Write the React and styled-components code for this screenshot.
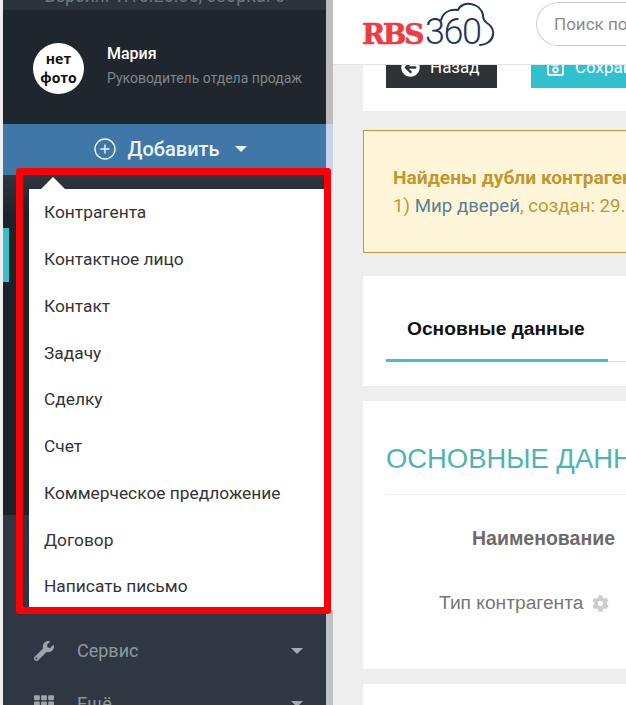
import React from 'react'
import styled, { createGlobalStyle } from 'styled-components'
import { FaWrench, FaTh, FaCog, FaArrowCircleLeft, FaRegSave } from 'react-icons/fa'
import { CirclePlus } from 'lucide-react'

const GlobalStyle = createGlobalStyle`
  html, body { margin: 0; padding: 0; height: 100%; overflow: hidden; background: #eeeeee; }
  body { font-family: "Liberation Sans", Arial, sans-serif; }
  * { box-sizing: border-box; }
`

const Shell = styled.div`
  position: relative;
  display: flex;
  width: 626px;
  height: 705px;
  overflow: hidden;
  padding-left: 3px;
`

// Левая колонка
const Sidebar = styled.aside`
  width: 323px;
  flex: none;
  display: flex;
  flex-direction: column;
  background: #2f3740;
`

const VersionBar = styled.div`
  height: 10px;
  flex: none;
  display: flex;
  align-items: flex-end;
  justify-content: center;
  overflow: hidden;
  padding-bottom: 3px;
  background: #2b333b;
  color: #6f767c;
  font: 18px/22px Roboto, sans-serif;
  white-space: nowrap;
`

const UserBlock = styled.div`
  height: 114px;
  flex: none;
  display: flex;
  align-items: flex-start;
  gap: 23px;
  padding: 33px 0 0 30px;
  background: #1f262d;
`

const Avatar = styled.div`
  width: 51px;
  height: 51px;
  flex: none;
  border-radius: 50%;
  background: #fff;
  color: #111;
  display: flex;
  align-items: center;
  justify-content: center;
  text-align: center;
  padding-bottom: 2px;
  font: 700 14px/19px "Open Sans", sans-serif;
`

const UserName = styled.div`
  margin-top: 1px;
  color: #fff;
  font: 500 16px/20px Roboto, sans-serif;
`

const UserRole = styled.div`
  margin-top: 5px;
  color: #7f868c;
  font: 14px/18px Roboto, sans-serif;
`

const AddButton = styled.div`
  height: 51px;
  flex: none;
  display: flex;
  align-items: center;
  justify-content: center;
  gap: 10px;
  padding: 0 0 1px 11px;
  background: #3f78a8;
  color: #eef3f8;
  font: 500 20px/24px Roboto, sans-serif;
`

const Caret = styled.span`
  width: 0;
  height: 0;
  border-left: 6px solid transparent;
  border-right: 6px solid transparent;
  border-top: 6px solid ${p => p.$color};
  margin-left: ${p => p.$gap || 0}px;
`

const NavFade = styled.div`
  height: 53px;
  flex: none;
  background: linear-gradient(#2e3640, #1c2329 80%);
`

const NavActive = styled.div`
  height: 54px;
  flex: none;
  background: #1c2329;
  border-left: 6px solid #37bfcc;
`

const NavSub = styled.div`
  height: 233px;
  flex: none;
  background: #1c2329;
`

const NavList = styled.nav`
  flex: 1;
  padding-top: 109px;
  background: #2f3842;
`

const NavRow = styled.div`
  height: 53px;
  display: flex;
  align-items: center;
  padding: 0 23px 0 31px;
  color: #8e989e;
  font: 18px/22px Roboto, sans-serif;
  svg { flex: none; width: 20px; color: #9ba4a9; font-size: 20px; }
  span:first-of-type { flex: 1; margin-left: 23px; }
`

const Scrollbar = styled.div`
  width: 7px;
  flex: none;
  display: flex;
  flex-direction: column;
`

const ScrollPart = styled.div`
  height: ${p => p.$h}px;
  flex: ${p => (p.$h ? 'none' : 1)};
  background: ${p => p.$color};
`

// Выпадающее меню поверх колонки
const Highlight = styled.div`
  position: absolute;
  left: 16px;
  top: 168px;
  width: 315px;
  height: 446px;
  border: 7px solid #fb0007;
  border-radius: 3px;
  z-index: 3;
`

const Dropdown = styled.ul`
  position: absolute;
  left: 29px;
  top: 189px;
  width: 295px;
  height: 418px;
  margin: 0;
  padding: 0 0 0 15px;
  list-style: none;
  background: #fff;
  display: flex;
  flex-direction: column;
  z-index: 2;
  &::before {
    content: '';
    position: absolute;
    left: 12px;
    top: -12px;
    border-left: 12px solid transparent;
    border-right: 12px solid transparent;
    border-bottom: 12px solid #fff;
  }
`

const DropdownItem = styled.li`
  height: 46.75px;
  flex: none;
  display: flex;
  align-items: center;
  color: #333;
  font: 17.35px/20px Roboto, sans-serif;
`

// Основная часть
const Main = styled.main`
  flex: 1;
  min-width: 0;
  display: flex;
  flex-direction: column;
  background: #eeeeee;
`

const Header = styled.header`
  height: 65px;
  flex: none;
  display: flex;
  align-items: flex-start;
  padding: 2px 0 0 30px;
  background: #fff;
  border-bottom: 1px solid #e4e4e4;
  position: relative;
  z-index: 1;
  overflow: hidden;
`

const Logo = styled.div`
  position: relative;
  width: 173px;
  flex: none;
  display: flex;
  align-items: baseline;
  padding-top: 11px;
  line-height: 38px;
`

const LogoRed = styled.span`
  margin-left: -1px;
  color: #ee3b42;
  font: 700 28px/38px "DejaVu Serif", serif;
  letter-spacing: -2.4px;
  -webkit-text-stroke: 0.6px #ee3b42;
`

const LogoBlue = styled.span`
  margin-left: 3px;
  color: #1d3557;
  font: 300 36px/38px Roboto, sans-serif;
  letter-spacing: -1.4px;
`

const LogoCloud = styled.svg`
  position: absolute;
  left: 0;
  top: -2px;
`

const SearchBox = styled.div`
  width: 200px;
  height: 44px;
  flex: none;
  display: flex;
  align-items: center;
  padding-left: 17px;
  border: 1px solid #cfcfcf;
  border-right: 0;
  border-radius: 22px 0 0 22px;
  color: #8a8a8a;
  font: 17px/20px Roboto, sans-serif;
  white-space: nowrap;
`

const Content = styled.div`
  flex: 1;
  display: flex;
  flex-direction: column;
  padding-left: 30px;
  overflow: hidden;
`

const Toolbar = styled.div`
  height: 46px;
  flex: none;
  display: flex;
  align-items: flex-end;
  gap: 34px;
  padding: 0 0 23px 23px;
  background: #fff;
  overflow: hidden;
  margin-bottom: 19px;
`

const ToolButton = styled.div`
  width: ${p => p.$w}px;
  height: 42px;
  flex: none;
  display: flex;
  align-items: center;
  gap: 10px;
  padding-left: 15px;
  background: ${p => p.$bg};
  color: #fff;
  font: 17px/20px Roboto, sans-serif;
  white-space: nowrap;
  overflow: hidden;
  svg { flex: none; font-size: 19px; }
`

const Alert = styled.div`
  height: 123px;
  flex: none;
  margin-bottom: 23px;
  padding: 33px 0 0 29px;
  width: 400px;
  background: #fff6d9;
  border: 1.5px solid #c19a30;
  color: #c2972f;
  font: 18.7px/28px Roboto, sans-serif;
  white-space: nowrap;
`

const AlertTitle = styled.div`
  font-weight: 700;
  font-size: 19.2px;
`

const AlertLink = styled.span`
  color: #5b7f95;
`

const Card = styled.section`
  flex: none;
  height: ${p => p.$h || 'auto'};
  width: 400px;
  background: #fff;
  margin-bottom: 15px;
`

const Tabs = styled.div`
  height: 86px;
  margin-left: 23px;
  border-bottom: 1px solid #ddd;
`

const Tab = styled.div`
  width: 222px;
  height: 86px;
  padding: 41px 0 0 21px;
  border-bottom: 3px solid #40bfcf;
  color: #111;
  font: 700 19.2px/24px "Liberation Sans", sans-serif;
  white-space: nowrap;
`

const FormBody = styled.div`
  padding: 42px 0 0 23px;
`

const SectionTitle = styled.h2`
  margin: 0;
  height: 52px;
  padding-bottom: 0;
  border-bottom: 1px solid #eeeeee;
  color: #4fb3b0;
  font: 400 27.4px/32px "Liberation Sans", sans-serif;
  white-space: nowrap;
`

const FieldRow = styled.div`
  display: flex;
  justify-content: flex-start;
  align-items: center;
  height: ${p => p.$h}px;
  padding-left: ${p => p.$left}px;
  color: ${p => p.$color};
  font: ${p => p.$weight} ${p => p.$size}px/24px "Liberation Sans", sans-serif;
  white-space: nowrap;
  svg { margin-left: 9px; color: #cccccc; font-size: 17px; }
`

const menuItems = [
  'Контрагента',
  'Контактное лицо',
  'Контакт',
  'Задачу',
  'Сделку',
  'Счет',
  'Коммерческое предложение',
  'Договор',
  'Написать письмо',
]

function App() {
  return (
    <Shell>
      <GlobalStyle />
      <Sidebar>
        <VersionBar>Версия: 1.16.26.06, сборка: 6</VersionBar>
        <UserBlock>
          <Avatar>нет<br />фото</Avatar>
          <div>
            <UserName>Мария</UserName>
            <UserRole>Руководитель отдела продаж</UserRole>
          </div>
        </UserBlock>
        <AddButton>
          <CirclePlus size={24} strokeWidth={1.4} />
          Добавить
          <Caret $color="#eef3f8" $gap={5} />
        </AddButton>
        <NavFade />
        <NavActive />
        <NavSub />
        <NavList>
          <NavRow>
            <FaWrench />
            <span>Сервис</span>
            <Caret $color="#a4acb1" />
          </NavRow>
          <NavRow>
            <FaTh />
            <span>Ещё</span>
            <Caret $color="#a4acb1" />
          </NavRow>
        </NavList>
      </Sidebar>
      <Scrollbar>
        <ScrollPart $h={124} $color="#bdbdbd" />
        <ScrollPart $h={51} $color="#c6d6e8" />
        <ScrollPart $h={435} $color="#f4f4f4" />
        <ScrollPart $color="#bfc3c6" />
      </Scrollbar>
      <Main>
        <Header>
          <Logo>
            <LogoRed>RBS</LogoRed>
            <LogoBlue>360</LogoBlue>
            <LogoCloud width="140" height="50" viewBox="0 0 140 50" fill="none">
              <path
                d="M78 20 C80 13 86 9 95 10 C97 5 103 3 108 4 C114 5 119 9 120 15 C120 18 121 21 124 23 C129 26 131 31 130 35 C129 41 123 45 117 45"
                stroke="#1d3557"
                strokeWidth="2"
                strokeLinecap="round"
              />
            </LogoCloud>
          </Logo>
          <SearchBox>Поиск по</SearchBox>
        </Header>
        <Content>
          <Toolbar>
            <ToolButton $w={111} $bg="#2f3338">
              <FaArrowCircleLeft />
              Назад
            </ToolButton>
            <ToolButton $w={110} $bg="#31c0cd">
              <FaRegSave />
              Сохранить
            </ToolButton>
          </Toolbar>
          <Alert>
            <AlertTitle>Найдены дубли контрагента</AlertTitle>
            1) <AlertLink>Мир дверей</AlertLink>, создан: 29.05.2020
          </Alert>
          <Card $h="110px">
            <Tabs>
              <Tab>Основные данные</Tab>
            </Tabs>
          </Card>
          <Card $h="268px">
            <FormBody>
              <SectionTitle>ОСНОВНЫЕ ДАННЫЕ</SectionTitle>
              <FieldRow $h={86} $left={86} $size={19.5} $color="#6b6b6b" $weight={700}>Наименование</FieldRow>
              <FieldRow $h={44} $left={53} $size={19.2} $color="#777777" $weight={400}>
                Тип контрагента
                <FaCog />
              </FieldRow>
            </FormBody>
          </Card>
          <Card $h="40px" />
        </Content>
      </Main>
      <Dropdown>
        {menuItems.map(item => <DropdownItem key={item}>{item}</DropdownItem>)}
      </Dropdown>
      <Highlight />
    </Shell>
  )
}

export default App
